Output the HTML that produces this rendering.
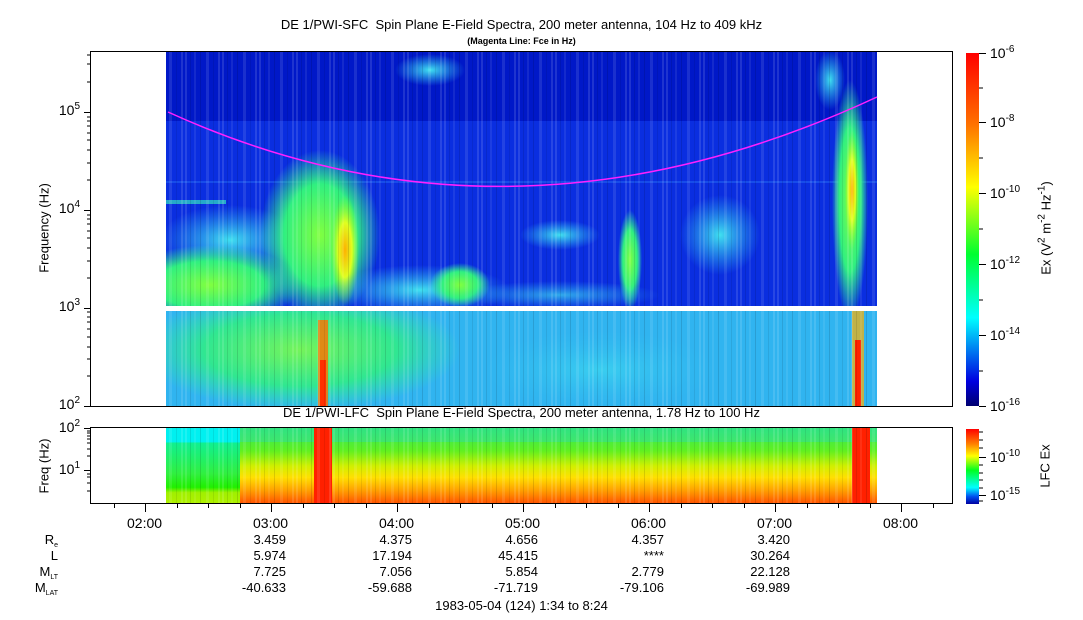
<!DOCTYPE html>
<html><head><meta charset="utf-8"><style>
body{margin:0;background:#fff;width:1083px;height:620px;overflow:hidden;font-family:"Liberation Sans",sans-serif;color:#000}
.t{position:absolute;font-size:13px;white-space:nowrap}
.r{text-align:right}
sup{font-size:10px;vertical-align:6px}
sub{font-size:7px;vertical-align:-3px}
</style></head><body>
<svg width="1083" height="620" style="position:absolute;left:0;top:0">
<defs>
<clipPath id="cu"><rect x="166" y="51" width="711" height="255"/></clipPath>
<clipPath id="cl"><rect x="166" y="311" width="711" height="95"/></clipPath>
<pattern id="st" width="37" height="10" patternUnits="userSpaceOnUse">
<rect x="0" width="2" height="10" fill="#fff" opacity=".12"/>
<rect x="5" width="1" height="10" fill="#000" opacity=".1"/>
<rect x="9" width="2" height="10" fill="#fff" opacity=".08"/>
<rect x="15" width="1" height="10" fill="#000" opacity=".12"/>
<rect x="21" width="3" height="10" fill="#fff" opacity=".1"/>
<rect x="28" width="1" height="10" fill="#000" opacity=".08"/>
<rect x="33" width="2" height="10" fill="#fff" opacity=".12"/>
</pattern>
<linearGradient id="cb1" x1="0" y1="0" x2="0" y2="1">
<stop offset="0" stop-color="#ff0000"/><stop offset=".2" stop-color="#ff7000"/><stop offset=".38" stop-color="#ffff00"/><stop offset=".57" stop-color="#00ff30"/><stop offset=".75" stop-color="#00ffff"/><stop offset=".85" stop-color="#0070f0"/><stop offset=".93" stop-color="#0000e0"/><stop offset="1" stop-color="#000070"/>
</linearGradient>
<linearGradient id="cb2" x1="0" y1="0" x2="0" y2="1">
<stop offset="0" stop-color="#ff0000"/><stop offset=".2" stop-color="#ff8000"/><stop offset=".36" stop-color="#ffff00"/><stop offset=".55" stop-color="#00ff20"/><stop offset=".78" stop-color="#00ffff"/><stop offset=".9" stop-color="#0050f0"/><stop offset="1" stop-color="#0000a0"/>
</linearGradient>
<radialGradient id="g1"><stop offset="0" stop-color="#80ff40"/><stop offset=".6" stop-color="#30f080"/><stop offset="1" stop-color="#30f0a0" stop-opacity="0"/></radialGradient>
<radialGradient id="gc"><stop offset="0" stop-color="#40e0f0"/><stop offset="1" stop-color="#30c0f0" stop-opacity="0"/></radialGradient>
<radialGradient id="gy"><stop offset="0" stop-color="#ffb000"/><stop offset=".5" stop-color="#e0ff20"/><stop offset="1" stop-color="#80ff20" stop-opacity="0"/></radialGradient>
<linearGradient id="low" x1="0" y1="0" x2="0" y2="1">
<stop offset="0" stop-color="#00f0f0"/><stop offset=".18" stop-color="#00f0f0"/><stop offset=".2" stop-color="#10f090"/><stop offset=".6" stop-color="#30f040"/><stop offset=".78" stop-color="#20f000"/><stop offset=".85" stop-color="#a0f000"/><stop offset="1" stop-color="#b0f000"/>
</linearGradient>
<linearGradient id="low2" x1="0" y1="0" x2="0" y2="1">
<stop offset="0" stop-color="#30e860"/><stop offset=".3" stop-color="#60f020"/><stop offset=".5" stop-color="#d0f000"/><stop offset=".65" stop-color="#ffe000"/><stop offset=".82" stop-color="#ffa000"/><stop offset="1" stop-color="#ff5000"/>
</linearGradient>
</defs>
<g clip-path="url(#cu)">
<rect x="166" y="51" width="711" height="255" fill="#0a2ee0"/>
<rect x="166" y="51" width="711" height="70" fill="#0018c8"/>
<rect x="166" y="181" width="711" height="2" fill="#2060f0" opacity=".6"/>
<ellipse cx="430" cy="70" rx="35" ry="16" fill="url(#gc)"/>
<ellipse cx="560" cy="235" rx="40" ry="15" fill="url(#gc)"/>
<ellipse cx="720" cy="235" rx="40" ry="40" fill="url(#gc)"/>
<ellipse cx="630" cy="260" rx="12" ry="50" fill="url(#g1)"/>
<ellipse cx="230" cy="240" rx="70" ry="35" fill="url(#gc)"/>
<ellipse cx="210" cy="285" rx="90" ry="40" fill="url(#g1)"/>
<ellipse cx="320" cy="235" rx="60" ry="85" fill="url(#g1)"/>
<ellipse cx="345" cy="250" rx="14" ry="55" fill="url(#gy)"/>
<ellipse cx="420" cy="290" rx="90" ry="25" fill="url(#gc)"/>
<ellipse cx="460" cy="285" rx="30" ry="22" fill="url(#g1)"/>
<ellipse cx="560" cy="295" rx="100" ry="14" fill="url(#gc)" opacity=".7"/>
<ellipse cx="850" cy="200" rx="18" ry="120" fill="url(#g1)"/>
<ellipse cx="852" cy="190" rx="7" ry="60" fill="url(#gy)"/>
<ellipse cx="830" cy="80" rx="15" ry="30" fill="url(#gc)"/>
<rect x="166" y="200" width="60" height="4" fill="#30e0c0" opacity=".7"/>
<rect x="166" y="51" width="711" height="255" fill="url(#st)"/>
</g>
<g clip-path="url(#cl)">
<rect x="166" y="311" width="711" height="95" fill="#30b4f0"/>
<ellipse cx="300" cy="350" rx="160" ry="60" fill="url(#g1)" opacity=".85"/>
<ellipse cx="600" cy="370" rx="120" ry="40" fill="url(#gc)" opacity=".6"/>
<rect x="318" y="320" width="10" height="86" fill="#ff7000" opacity=".8"/>
<rect x="320" y="360" width="6" height="46" fill="#ff3000"/>
<rect x="852" y="311" width="12" height="95" fill="#ffb000" opacity=".7"/>
<rect x="855" y="340" width="6" height="66" fill="#ff2000"/>
<rect x="166" y="311" width="711" height="95" fill="url(#st)"/>
</g>
<path d="M168 112 Q 510 268 877 97" fill="none" stroke="#ff20ff" stroke-width="1.5"/>
<rect x="90.5" y="51.5" width="862" height="355" fill="none" stroke="#000"/>
<rect x="166" y="428" width="711" height="76" fill="url(#low)"/>
<rect x="240" y="428" width="637" height="76" fill="url(#low2)"/>
<rect x="240" y="428" width="637" height="14" fill="#30e0a0" opacity=".5"/>
<rect x="314" y="428" width="18" height="76" fill="#ff2000"/>
<rect x="852" y="428" width="18" height="76" fill="#ff2000"/>
<rect x="166" y="428" width="711" height="76" fill="url(#st)"/>
<rect x="90.5" y="427.5" width="862" height="76" fill="none" stroke="#000"/>
<rect x="966" y="53" width="13" height="353" fill="url(#cb1)"/>
<rect x="966" y="429" width="13" height="75" fill="url(#cb2)"/>
<g stroke="#000" stroke-width="1">
<path d="M979 53.5h7M979 88h4M979 122.5h7M979 158h4M979 193.5h7M979 229h4M979 264.5h7M979 300h4M979 335.5h7M979 371h4M979 406.5h7"/>
<path d="M979 457.5h7M979 495.5h7M979 432h4M979 440h4M979 448h4M979 465h4M979 473h4M979 480h4M979 488h4M979 501h4"/>
<path d="M90 112.5h-6M90 210.5h-6M90 308.5h-6M90 406.5h-6"/>
<path d="M90 82h-3M90 64h-3M90 55h-3M90 180h-3M90 163h-3M90 150h-3M90 140h-3M90 133h-3M90 126h-3M90 121h-3M90 117h-3M90 278h-3M90 261h-3M90 248h-3M90 238h-3M90 231h-3M90 224h-3M90 219h-3M90 215h-3M90 376h-3M90 359h-3M90 347h-3M90 337h-3M90 329h-3M90 322h-3M90 317h-3M90 312h-3"/>
<path d="M90 428.5h-6M90 470.5h-6M90 491h-3M90 483h-3M90 477h-3M90 474h-3M90 456h-3M90 449h-3M90 443h-3M90 439h-3M90 436h-3M90 433h-3M90 431h-3"/>
<path d="M145.5 504v8M271.5 504v8M397.5 504v8M523.5 504v8M649.5 504v8M775.5 504v8M901.5 504v8"/>
<path d="M114.5 504v4M177.5 504v4M208.5 504v4M240.5 504v4M303.5 504v4M334.5 504v4M366.5 504v4M429.5 504v4M460.5 504v4M492.5 504v4M555.5 504v4M586.5 504v4M618.5 504v4M681.5 504v4M712.5 504v4M744.5 504v4M807.5 504v4M838.5 504v4M870.5 504v4M933.5 504v4"/>
</g>
</svg>
<div class="t" style="left:0;width:1043px;top:17px;text-align:center">DE 1/PWI-SFC&nbsp; Spin Plane E-Field Spectra, 200 meter antenna, 104 Hz to 409 kHz</div>
<div class="t" style="left:0;width:1043px;top:36px;text-align:center;font-size:9px;font-weight:bold">(Magenta Line: Fce in Hz)</div>
<div class="t" style="left:0;width:1043px;top:405px;text-align:center">DE 1/PWI-LFC&nbsp; Spin Plane E-Field Spectra, 200 meter antenna, 1.78 Hz to 100 Hz</div>
<div class="t r" style="left:40px;width:40px;top:101px;font-size:14px">10<sup>5</sup></div>
<div class="t r" style="left:40px;width:40px;top:199px;font-size:14px">10<sup>4</sup></div>
<div class="t r" style="left:40px;width:40px;top:297px;font-size:14px">10<sup>3</sup></div>
<div class="t r" style="left:40px;width:40px;top:395px;font-size:14px">10<sup>2</sup></div>
<div class="t r" style="left:40px;width:40px;top:418px;font-size:14px">10<sup>2</sup></div>
<div class="t r" style="left:40px;width:40px;top:460px;font-size:14px">10<sup>1</sup></div>
<div class="t" style="left:44px;top:228px;transform:translate(-50%,-50%) rotate(-90deg)">Frequency (Hz)</div>
<div class="t" style="left:44px;top:466px;transform:translate(-50%,-50%) rotate(-90deg)">Freq (Hz)</div>
<div class="t" style="left:990px;top:44px;font-size:14px">10<sup>-6</sup></div>
<div class="t" style="left:990px;top:113px;font-size:14px">10<sup>-8</sup></div>
<div class="t" style="left:990px;top:184px;font-size:14px">10<sup>-10</sup></div>
<div class="t" style="left:990px;top:255px;font-size:14px">10<sup>-12</sup></div>
<div class="t" style="left:990px;top:326px;font-size:14px">10<sup>-14</sup></div>
<div class="t" style="left:990px;top:397px;font-size:14px">10<sup>-16</sup></div>
<div class="t" style="left:990px;top:448px;font-size:14px">10<sup>-10</sup></div>
<div class="t" style="left:990px;top:486px;font-size:14px">10<sup>-15</sup></div>
<div class="t" style="left:1045px;top:228px;transform:translate(-50%,-50%) rotate(-90deg)">Ex (V<sup>2</sup> m<sup>-2</sup> Hz<sup>-1</sup>)</div>
<div class="t" style="left:1045px;top:466px;transform:translate(-50%,-50%) rotate(-90deg)">LFC Ex</div>
<div class="t" style="left:127px;top:515px;font-size:14px">02:00</div>
<div class="t" style="left:253px;top:515px;font-size:14px">03:00</div>
<div class="t" style="left:379px;top:515px;font-size:14px">04:00</div>
<div class="t" style="left:505px;top:515px;font-size:14px">05:00</div>
<div class="t" style="left:631px;top:515px;font-size:14px">06:00</div>
<div class="t" style="left:757px;top:515px;font-size:14px">07:00</div>
<div class="t" style="left:883px;top:515px;font-size:14px">08:00</div>
<div class="t r" style="left:0;width:58px;top:532px">R<sub>e</sub></div>
<div class="t r" style="left:0;width:58px;top:548px">L</div>
<div class="t r" style="left:0;width:58px;top:564px">M<sub>LT</sub></div>
<div class="t r" style="left:0;width:58px;top:580px">M<sub>LAT</sub></div>
<div class="t r" style="left:186px;width:100px;top:532px">3.459</div>
<div class="t r" style="left:312px;width:100px;top:532px">4.375</div>
<div class="t r" style="left:438px;width:100px;top:532px">4.656</div>
<div class="t r" style="left:564px;width:100px;top:532px">4.357</div>
<div class="t r" style="left:690px;width:100px;top:532px">3.420</div>
<div class="t r" style="left:186px;width:100px;top:548px">5.974</div>
<div class="t r" style="left:312px;width:100px;top:548px">17.194</div>
<div class="t r" style="left:438px;width:100px;top:548px">45.415</div>
<div class="t r" style="left:564px;width:100px;top:548px">****</div>
<div class="t r" style="left:690px;width:100px;top:548px">30.264</div>
<div class="t r" style="left:186px;width:100px;top:564px">7.725</div>
<div class="t r" style="left:312px;width:100px;top:564px">7.056</div>
<div class="t r" style="left:438px;width:100px;top:564px">5.854</div>
<div class="t r" style="left:564px;width:100px;top:564px">2.779</div>
<div class="t r" style="left:690px;width:100px;top:564px">22.128</div>
<div class="t r" style="left:186px;width:100px;top:580px">-40.633</div>
<div class="t r" style="left:312px;width:100px;top:580px">-59.688</div>
<div class="t r" style="left:438px;width:100px;top:580px">-71.719</div>
<div class="t r" style="left:564px;width:100px;top:580px">-79.106</div>
<div class="t r" style="left:690px;width:100px;top:580px">-69.989</div>
<div class="t" style="left:0;width:1043px;top:598px;text-align:center">1983-05-04 (124) 1:34 to 8:24</div>
</body></html>
